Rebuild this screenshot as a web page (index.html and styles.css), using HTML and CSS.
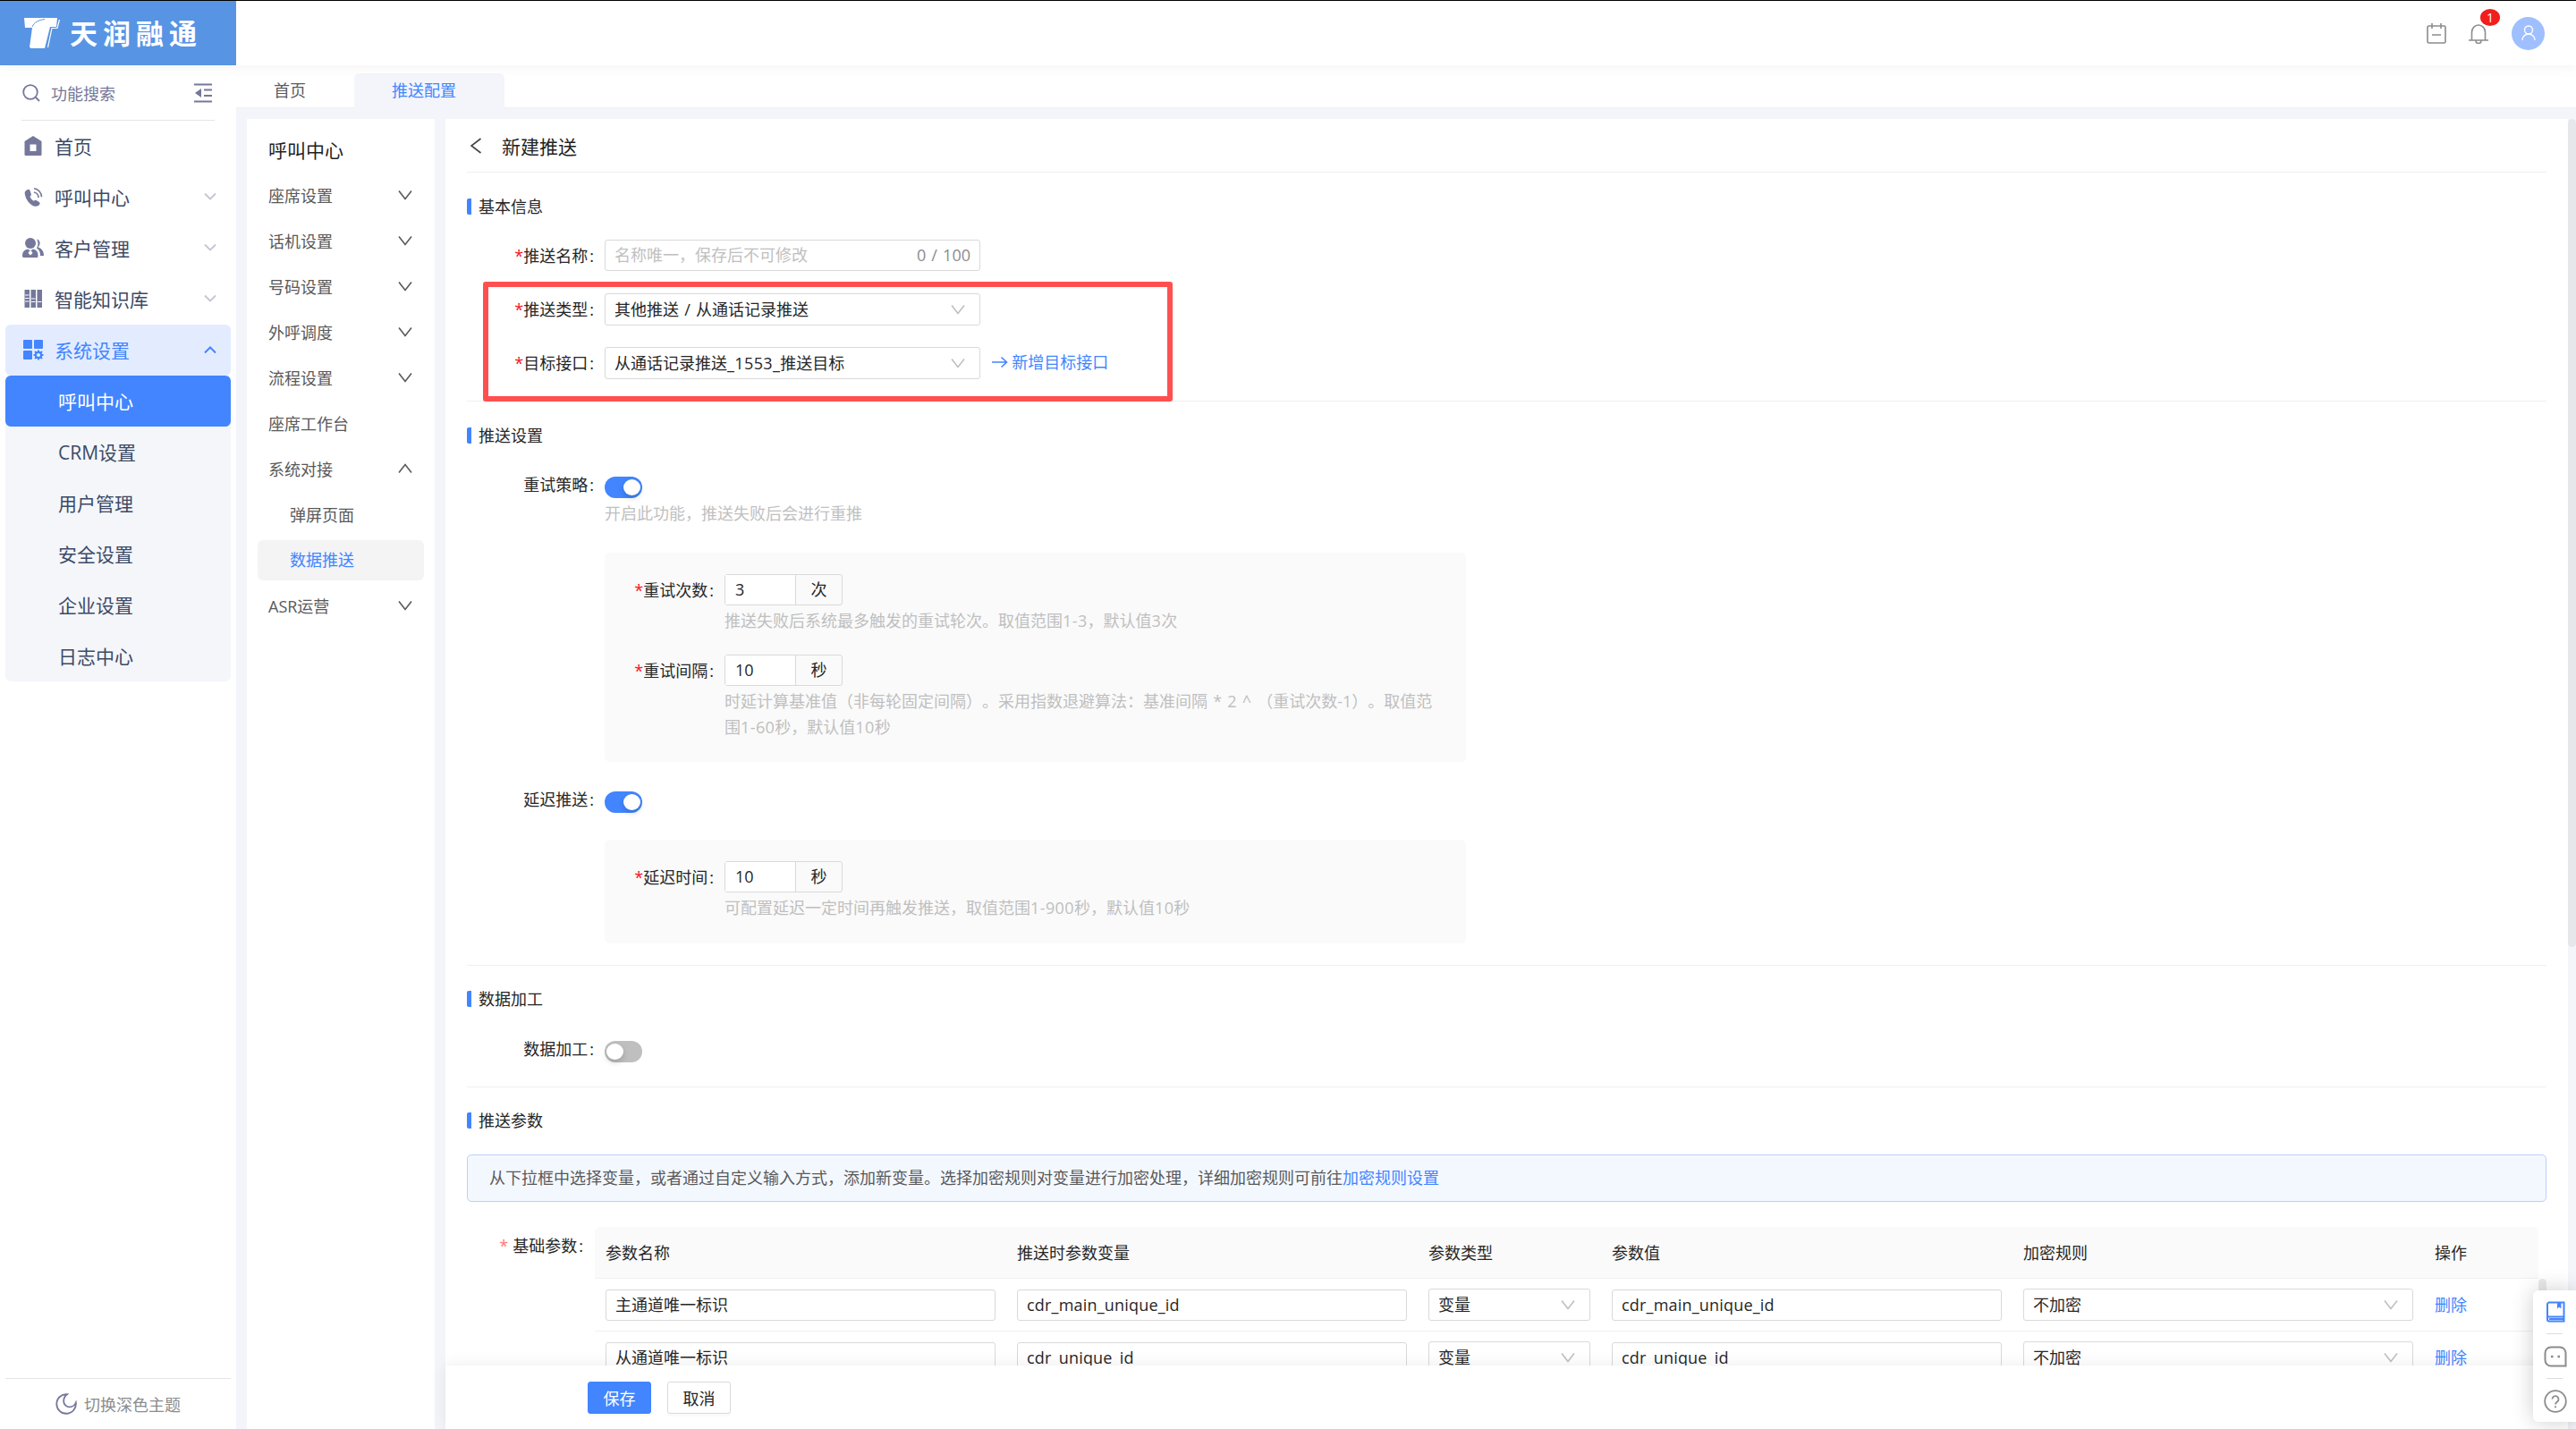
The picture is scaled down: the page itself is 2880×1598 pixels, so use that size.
FILE: index.html
```html
<!DOCTYPE html>
<html lang="zh-CN">
<head>
    <meta charset="UTF-8">
    <meta name="viewport" content="width=device-width, initial-scale=1.0">
    <title>新建推送</title>
    <link rel="stylesheet" href="styles.css">
</head>
<body>
    <!-- 公用图标 -->
    <svg class="sprite" width="0" height="0">
        <symbol id="down" viewBox="0 0 16 12"><path d="M1 1.5l7 9 7-9" fill="none" stroke="currentColor" stroke-width="1.6"/></symbol>
        <symbol id="up" viewBox="0 0 16 12"><path d="M1 10.5l7-9 7 9" fill="none" stroke="currentColor" stroke-width="1.6"/></symbol>
        <symbol id="menu-down" viewBox="0 0 14 10"><path d="M1 1.5l6 6 6-6" fill="none" stroke="currentColor" stroke-width="1.8"/></symbol>
    </svg>

    <header class="header">
        <div class="logo">
            <svg width="43" height="36" viewBox="0 0 43 36">
                <path d="M1 1h35l-2 3c-5 0-8 2-9 5l-2 25H7l3-22H2z" fill="#fff"/>
                <path d="M17 11C19 5 24 2 38 1l-1 10h-7l-6 24H8l3-24z" fill="#fff"/>
                <path d="M10 11c2-5 7-7.500 14-8.500" fill="none" stroke="#5794e4" stroke-width="1"/>
                <path d="M40.500 3l-2.500 9.500h-6L27.500 34" fill="none" stroke="#fff" stroke-width="1.2"/>
            </svg>
            <span>天润融通</span>
        </div>
        <div class="header-tools">
            <svg class="calendar" width="24" height="24" viewBox="0 0 24 24" fill="none" stroke="#8c8c8c" stroke-width="1.6">
                <rect x="2" y="4" width="20" height="19" rx="1.5"/>
                <path d="M7 1v6M17 1v6M7 14h10"/>
            </svg>
            <div class="bell">
                <svg width="24" height="24" viewBox="0 0 24 24" fill="none" stroke="#8c8c8c" stroke-width="1.6">
                    <path d="M4.500 20v-9a7.500 8 0 0 1 15 0v9M1 20h22M9 20.500a3 3 0 0 0 6 0"/>
                </svg>
                <span class="badge">1</span>
            </div>
            <div class="avatar">
                <svg width="16" height="18" viewBox="0 0 16 18" fill="none" stroke="#fff" stroke-width="1.4">
                    <circle cx="8" cy="5.500" r="4.500"/>
                    <path d="M1 17a7 7 0 0 1 14 0"/>
                </svg>
            </div>
        </div>
    </header>

    <div class="layout">
        <aside class="sidebar">
            <div class="search">
                <svg width="20" height="20" viewBox="0 0 20 20" fill="none" stroke="#75789a" stroke-width="1.8">
                    <circle cx="9" cy="9" r="7.800"/>
                    <path d="M14.500 14.500L19 19"/>
                </svg>
                <span>功能搜索</span>
                <svg class="fold" width="20" height="22" viewBox="0 0 20 22">
                    <path d="M0 1.500h20M11 7.500h9M11 14h9M0 20.500h20" stroke="#75789a" stroke-width="2"/>
                    <path d="M8 6v10l-7-5z" fill="#75789a"/>
                </svg>
            </div>
            <ul class="menu">
                <li>
                    <svg class="icon" width="24" height="24" viewBox="0 0 24 24"><path fill="#75789a" fill-rule="evenodd" d="M12 1l9.500 6v15a1 1 0 0 1-1 1h-17a1 1 0 0 1-1-1V7zM8.500 10.500v7.500h7v-7.500z"/></svg>
                    首页
                </li>
                <li>
                    <svg class="icon" width="24" height="24" viewBox="0 0 24 24">
                        <path fill="#75789a" d="M6 4C3 5 2 7 3 10c1.500 6 5 10.500 10 12.500 3 1 6-.5 6.500-2.500.3-1-.2-1.700-1-2.200l-3-1.800c-1-.5-1.800-.2-2.600.8C10.500 15.500 9 13.500 8.500 11.500c1.200-.6 1.600-1.500 1.300-2.500L8.500 5C8 4 7 3.600 6 4z"/>
                        <path fill="none" stroke="#75789a" stroke-width="1.600" d="M13 7a6 6 0 0 1 5 6M13 2.800a9.500 9.500 0 0 1 8.500 9.500"/>
                    </svg>
                    呼叫中心
                    <svg class="arrow" width="14" height="10"><use href="#menu-down"/></svg>
                </li>
                <li>
                    <svg class="icon" width="26" height="24" viewBox="0 0 26 24">
                        <ellipse cx="10" cy="7" rx="6" ry="6" fill="#75789a"/>
                        <path fill="#75789a" d="M1 21c0-4.500 2-6.500 6-7.500l3 2 3-2c4 1 5.500 3 5.500 7.500 0 1.500-.4 2-1.500 2H3c-1.500 0-2-.5-2-2zM17 2.500c4 1 5 5.500 1.500 9 4 1.500 6.500 4 6.500 9.500h-4c0-4-1-6.500-4-8.500 2-3 2-7 0-10z"/>
                        <path d="M9 15.500h2l1.500 2.500-2.500 2.500L7.500 18z" fill="#fff"/>
                    </svg>
                    客户管理
                    <svg class="arrow" width="14" height="10"><use href="#menu-down"/></svg>
                </li>
                <li>
                    <svg class="icon" width="24" height="24" viewBox="0 0 24 24">
                        <path fill="#75789a" d="M2.500 2h5.500v20H2.500zM9.500 2H15v20H9.500zM16.500 2H22v20h-5.500z"/>
                        <path d="M3 8h4.500M3 11.500h4.500M3 15h4.500M10 12h4.500M10 15.500h4.500M17 15.500h4.500" stroke="#fff" stroke-width="1.200"/>
                    </svg>
                    智能知识库
                    <svg class="arrow" width="14" height="10"><use href="#menu-down"/></svg>
                </li>
                <li class="open">
                    <svg class="icon" width="24" height="24" viewBox="0 0 24 24" fill="#4285ff">
                        <rect x="1" y="1" width="10" height="10" rx="1"/>
                        <rect x="13" y="1" width="10" height="10" rx="1"/>
                        <rect x="1" y="13" width="10" height="10" rx="1"/>
                        <circle cx="18" cy="18" r="3.200" fill="none" stroke="#4285ff" stroke-width="2.200"/>
                        <path d="M18 12.500v2M18 21.500v2M12.500 18h2M21.500 18h2M14 14l1.500 1.500M20.500 20.500L22 22M22 14l-1.500 1.500M15.500 20.500L14 22" stroke="#4285ff" stroke-width="2"/>
                    </svg>
                    系统设置
                    <svg class="arrow" width="14" height="10"><path d="M1 8.500l6-6 6 6" fill="none" stroke="#4285ff" stroke-width="2"/></svg>
                </li>
            </ul>
            <ul class="submenu">
                <li class="active">呼叫中心</li>
                <li>CRM设置</li>
                <li>用户管理</li>
                <li>安全设置</li>
                <li>企业设置</li>
                <li>日志中心</li>
            </ul>
            <div class="theme">
                <svg width="24" height="24" viewBox="0 0 24 24" fill="none" stroke="#75789a" stroke-width="1.800">
                    <path d="M13 1.200A10.800 10.800 0 1 0 22.800 10.500C21 14.500 17 16.500 12.500 14.500 8 12 8 5 13 1.200z"/>
                </svg>
                <span>切换深色主题</span>
            </div>
        </aside>

        <div class="content">
            <nav class="tabs">
                <div class="tab">首页</div>
                <div class="tab active">推送配置</div>
            </nav>

            <div class="panels">
                <div class="side-nav">
                    <h3>呼叫中心</h3>
                    <ul>
                        <li>座席设置<svg width="16" height="12"><use href="#down"/></svg></li>
                        <li>话机设置<svg width="16" height="12"><use href="#down"/></svg></li>
                        <li>号码设置<svg width="16" height="12"><use href="#down"/></svg></li>
                        <li>外呼调度<svg width="16" height="12"><use href="#down"/></svg></li>
                        <li>流程设置<svg width="16" height="12"><use href="#down"/></svg></li>
                        <li>座席工作台</li>
                        <li>系统对接<svg width="16" height="12"><use href="#up"/></svg></li>
                        <li class="child">弹屏页面</li>
                        <li class="child active"><span>数据推送</span></li>
                        <li>ASR运营<svg width="16" height="12"><use href="#down"/></svg></li>
                    </ul>
                </div>

                <main class="main">
                    <div class="page">
                        <div class="page-title">
                            <svg width="14" height="18" viewBox="0 0 14 18"><path d="M12.500 1L2 9l10.500 8" fill="none" stroke="#444" stroke-width="1.600"/></svg>
                            <h2>新建推送</h2>
                        </div>

                        <section class="section basic">
                            <h4>基本信息</h4>
                            <div class="form-item">
                                <label class="required">推送名称</label>
                                <div class="input"><span class="placeholder">名称唯一，保存后不可修改</span><span class="count">0 / 100</span></div>
                            </div>
                            <div class="form-item">
                                <label class="required">推送类型</label>
                                <div class="select">其他推送 / 从通话记录推送<svg width="16" height="12"><use href="#down"/></svg></div>
                            </div>
                            <div class="form-item">
                                <label class="required">目标接口</label>
                                <div class="select"><span>从通话记录推送<span class="latin">_1553_</span>推送目标</span><svg width="16" height="12"><use href="#down"/></svg></div>
                                <a class="add-link" href="#">
                                    <svg width="18" height="14" viewBox="0 0 18 14"><path d="M0 7h16M10.500 1.500L16.500 7l-6 5.500" fill="none" stroke="#4285ff" stroke-width="1.600"/></svg>
                                    新增目标接口
                                </a>
                            </div>
                            <div class="mark"></div>
                        </section>

                        <section class="section push">
                            <h4>推送设置</h4>
                            <div class="form-item">
                                <label>重试策略</label>
                                <div class="switch on"></div>
                            </div>
                            <p class="help">开启此功能，推送失败后会进行重推</p>
                            <div class="box retry">
                                <div class="form-item">
                                    <label class="required">重试次数</label>
                                    <div class="number"><span>3</span><em>次</em></div>
                                </div>
                                <p class="help">推送失败后系统最多触发的重试轮次。取值范围<span class="latin">1-3</span>，默认值<span class="latin">3</span>次</p>
                                <div class="form-item">
                                    <label class="required">重试间隔</label>
                                    <div class="number"><span>10</span><em>秒</em></div>
                                </div>
                                <p class="help">时延计算基准值（非每轮固定间隔）。采用指数退避算法：基准间隔 * 2 ^ （重试次数-1）。取值范围<span class="latin">1-60</span>秒，默认值<span class="latin">10</span>秒</p>
                            </div>
                            <div class="form-item delay-switch">
                                <label>延迟推送</label>
                                <div class="switch on"></div>
                            </div>
                            <div class="box delay">
                                <div class="form-item">
                                    <label class="required">延迟时间</label>
                                    <div class="number"><span>10</span><em>秒</em></div>
                                </div>
                                <p class="help">可配置延迟一定时间再触发推送，取值范围<span class="latin">1-900</span>秒，默认值<span class="latin">10</span>秒</p>
                            </div>
                        </section>

                        <section class="section process">
                            <h4>数据加工</h4>
                            <div class="form-item">
                                <label>数据加工</label>
                                <div class="switch"></div>
                            </div>
                        </section>

                        <section class="section params">
                            <h4>推送参数</h4>
                            <div class="alert">从下拉框中选择变量，或者通过自定义输入方式，添加新变量。选择加密规则对变量进行加密处理，详细加密规则可前往<a href="#">加密规则设置</a></div>
                            <div class="param-wrap">
                                <label class="param-label">基础参数</label>
                                <div class="table">
                                    <div class="tr th">
                                        <div>参数名称</div>
                                        <div>推送时参数变量</div>
                                        <div>参数类型</div>
                                        <div>参数值</div>
                                        <div>加密规则</div>
                                        <div>操作</div>
                                    </div>
                                    <div class="tr">
                                        <div><div class="input">主通道唯一标识</div></div>
                                        <div><div class="input code">cdr_main_unique_id</div></div>
                                        <div><div class="select">变量<svg width="16" height="12"><use href="#down"/></svg></div></div>
                                        <div><div class="input code">cdr_main_unique_id</div></div>
                                        <div><div class="select">不加密<svg width="16" height="12"><use href="#down"/></svg></div></div>
                                        <div><a href="#">删除</a></div>
                                    </div>
                                    <div class="tr">
                                        <div><div class="input">从通道唯一标识</div></div>
                                        <div><div class="input code">cdr_unique_id</div></div>
                                        <div><div class="select">变量<svg width="16" height="12"><use href="#down"/></svg></div></div>
                                        <div><div class="input code">cdr_unique_id</div></div>
                                        <div><div class="select">不加密<svg width="16" height="12"><use href="#down"/></svg></div></div>
                                        <div><a href="#">删除</a></div>
                                    </div>
                                </div>
                                <div class="table-scroll"></div>
                            </div>
                        </section>
                    </div>

                    <footer class="footer">
                        <button class="btn primary">保存</button>
                        <button class="btn">取消</button>
                    </footer>
                </main>
                <div class="scrollbar"></div>
            </div>
        </div>
    </div>

    <div class="float-tools">
        <svg width="22" height="24" viewBox="0 0 22 24" fill="none" stroke="#4285ff" stroke-width="2">
            <path d="M4 1.500h16.500v21H4A2 2 0 0 1 2 20.500V3.500a2 2 0 0 1 2-2zM2 17.500h18.500M4 20h16"/>
            <path d="M13 2v6.500l2.200-2 2.200 2V2z" fill="#4285ff" stroke="none"/>
        </svg>
        <i></i>
        <svg width="26" height="24" viewBox="0 0 26 24" fill="none" stroke="#8c8c8c" stroke-width="2">
            <path d="M8 1.500h10a6.500 6.500 0 0 1 6.500 6.500v14.500H8A6.500 6.500 0 0 1 1.500 16V8A6.500 6.500 0 0 1 8 1.500z"/>
            <path d="M8 12h2.500M15.500 12H18" stroke-width="2.500"/>
        </svg>
        <i></i>
        <svg width="26" height="26" viewBox="0 0 26 26" fill="none" stroke="#8c8c8c" stroke-width="1.800">
            <circle cx="13" cy="13" r="11.800"/>
            <path d="M9.500 10.500a3.500 3.500 0 1 1 5.500 3c-1.300.9-2 1.500-2 3M13 18.200v2"/>
        </svg>
    </div>
</body>
</html>
```
FILE: styles.css
```css
* {
    margin: 0;
    padding: 0;
    box-sizing: border-box;
}

body {
    width: 2880px;
    height: 1598px;
    overflow: hidden;
    position: relative;
    display: flex;
    flex-direction: column;
    background: #fff;
    border-top: 1px solid #000;
    color: #262626;
    font-family: "Open Sans", "Noto Sans CJK SC", sans-serif;
    font-size: 18px;
    font-weight: 400;
    word-spacing: 1.5px;
    text-spacing-trim: space-all;
}

ul {
    list-style: none;
}

a {
    color: #4285ff;
    text-decoration: none;
}

.sprite {
    position: absolute;
}

.latin {
    letter-spacing: 0.4px;
}

/* 顶部 */
.header {
    height: 72px;
    flex: none;
    display: flex;
    justify-content: space-between;
    background: #fff;
    box-shadow: 0 2px 14px rgba(0, 0, 0, 0.05);
    position: relative;
    z-index: 5;
}

.logo {
    width: 264px;
    background: #5794e4;
    display: flex;
    align-items: center;
    padding-left: 26px;
    gap: 9px;
}

.logo span {
    color: #fff;
    font-size: 31px;
    font-weight: 700;
    letter-spacing: 6px;
    line-height: 40px;
}

.header-tools {
    display: flex;
    align-items: center;
    padding-right: 35px;
}

.calendar {
    margin-right: 23px;
}

.bell {
    position: relative;
    height: 24px;
    margin-right: 25px;
}

.badge {
    position: absolute;
    left: 14px;
    top: -15px;
    width: 22px;
    height: 19px;
    border-radius: 50%;
    background: #f21d1d;
    color: #fff;
    font-size: 14px;
    line-height: 19px;
    text-align: center;
}

.avatar {
    width: 37px;
    height: 37px;
    border-radius: 50%;
    background: #9fbfff;
    display: flex;
    align-items: center;
    justify-content: center;
}

.layout {
    flex: 1;
    min-height: 0;
    display: flex;
}

/* 左侧菜单 */
.sidebar {
    width: 264px;
    flex: none;
    display: flex;
    flex-direction: column;
}

.search {
    height: 62px;
    margin: 0 24px;
    border-bottom: 1px solid #e4e4e6;
    display: flex;
    align-items: center;
    color: #75789a;
    padding: 1px 3px 0 1px;
}

.search span {
    margin-left: 12px;
    flex: 1;
}

.menu li {
    height: 57px;
    margin: 0 6px;
    padding: 0 16px 2px 18px;
    display: flex;
    align-items: center;
    font-size: 21px;
    color: #3c4a66;
}

.menu .icon {
    width: 26px;
    margin-right: 11px;
}

.menu .arrow {
    margin-left: auto;
    color: #c3c5d3;
}

.menu .open {
    background: #e3ecff;
    color: #4285ff;
    border-radius: 6px;
}

.submenu {
    margin: 0 6px;
    background: #f4f6fa;
    border-radius: 6px;
}

.submenu li {
    height: 57px;
    line-height: 58px;
    padding-left: 59px;
    font-size: 21px;
    color: #3c4a66;
}

.submenu .active {
    background: #4285ff;
    border-radius: 6px;
    color: #fff;
}

.theme {
    margin: auto 6px 0;
    height: 57px;
    border-top: 1px solid #e4e4e6;
    display: flex;
    align-items: center;
    justify-content: center;
    gap: 8px;
    color: #8c8c8c;
}

/* 标签页 */
.content {
    flex: 1;
    min-width: 0;
    display: flex;
    flex-direction: column;
    background: #f4f5fa;
}

.tabs {
    height: 48px;
    padding: 9px 0 0 0;
    flex: none;
    display: flex;
    background: #fff;
    border-bottom: 1px solid #f0f0f0;
}

.tab {
    width: 132px;
    line-height: 39px;
    padding-left: 42px;
    color: #595959;
}

.tab.active {
    width: 168px;
    height: 39px;
    background: #f4f5fa;
    border-radius: 6px 6px 0 0;
    color: #4285ff;
}

.panels {
    flex: 1;
    min-height: 0;
    display: flex;
    margin: 12px 0 0 12px;
}

.side-nav {
    width: 210px;
    flex: none;
    background: #fff;
    margin-right: 12px;
}

.side-nav h3 {
    font-size: 21px;
    font-weight: 400;
    line-height: 30px;
    padding: 20px 0 10px 24px;
    color: #1f1f1f;
}

.side-nav li {
    height: 51px;
    padding: 0 25px 2px 24px;
    display: flex;
    align-items: center;
    justify-content: space-between;
    color: #595959;
}

.side-nav .child {
    padding-left: 48px;
}

.side-nav .child.active {
    padding: 0 12px;
    color: #4285ff;
}

.side-nav .active span {
    width: 100%;
    padding-left: 36px;
    line-height: 45px;
    background: #f4f4f4;
    border-radius: 6px;
}

/* 主体 */
.main {
    width: 2373px;
    display: flex;
    flex-direction: column;
    background: #fff;
}

.page {
    flex: 1;
    min-height: 0;
    overflow: hidden;
    padding: 0 24px;
}

.page-title {
    height: 60px;
    display: flex;
    align-items: center;
    border-bottom: 1px solid #efefef;
    padding-left: 3px;
}

.page-title h2 {
    margin-left: 22px;
    font-size: 21px;
    font-weight: 400;
    color: #1f1f1f;
}

.section {
    position: relative;
    border-bottom: 1px solid #f0f0f0;
    padding-top: 29px;
}

.section h4 {
    height: 18px;
    line-height: 18px;
    font-size: 18px;
    font-weight: 400;
    border-left: 5px solid #4285ff;
    border-radius: 2px;
    padding-left: 8px;
    margin-bottom: 28px;
}

.form-item {
    display: flex;
    height: 36px;
}

.form-item label {
    width: 154px;
    padding-right: 12px;
    line-height: 36px;
    text-align: right;
    flex: none;
}

.form-item label::after {
    content: ":";
    margin-left: 2px;
}

.required::before {
    content: "*";
    color: #f5121d;
}

.basic .form-item {
    margin-bottom: 24px;
}

.input,
.select {
    width: 420px;
    height: 35px;
    border: 1px solid #d9d9d9;
    border-radius: 3px;
    padding: 0 10px;
    line-height: 33px;
    background: #fff;
    display: flex;
    justify-content: space-between;
}

.select {
    height: 36px;
    padding-right: 16px;
    align-items: center;
}

.select svg {
    color: #bfbfbf;
}

.placeholder {
    color: #bfbfbf;
}

.count {
    color: #8c8c8c;
}

.add-link {
    margin-left: 13px;
    line-height: 35px;
}

.add-link svg {
    margin-right: -2px;
}

/* 红色标注框 */
.mark {
    position: absolute;
    left: 18px;
    top: 122px;
    width: 771px;
    height: 134px;
    border: 6px solid #ff5050;
    border-radius: 3px;
}

.switch {
    width: 42px;
    height: 24px;
    margin-top: 9px;
    border-radius: 12px;
    background: #bfbfbf;
    padding: 3px 2px;
}

.switch::before {
    content: "";
    display: block;
    width: 19px;
    height: 18px;
    border-radius: 50%;
    background: #fff;
    box-shadow: 0 3px 6px rgba(0, 35, 11, 0.2);
}

.switch.on {
    background: #4285ff;
}

.switch.on::before {
    margin-left: auto;
}

.help {
    margin-left: 154px;
    line-height: 29px;
    color: #bfbfbf;
}

.box {
    width: 963px;
    margin-left: 154px;
    padding: 24px 0;
    background: #fafafa;
    border-radius: 6px;
}

.box label {
    width: 134px;
}

.box .help {
    width: 800px;
    margin: 2px 0 23px 134px;
}

.box .help:last-child {
    margin-bottom: 0;
}

.number {
    display: flex;
    width: 132px;
    height: 35px;
    border: 1px solid #d9d9d9;
    border-radius: 3px;
    line-height: 33px;
}

.number span {
    width: 79px;
    padding-left: 11px;
    background: #fff;
    border-right: 1px solid #d9d9d9;
}

.number em {
    flex: 1;
    font-style: normal;
    text-align: center;
}

.retry {
    height: 234px;
    margin-top: 29px;
    padding-bottom: 0;
}

.delay-switch {
    margin-top: 24px;
}

.delay {
    height: 116px;
    margin: 27px 0 24px 154px;
}

.process,
.params {
    padding-top: 28px;
}

.process h4,
.params h4 {
    margin-bottom: 29px;
}

.process {
    padding-bottom: 24px;
}

.params {
    border-bottom: none;
}

.alert {
    height: 53px;
    line-height: 50px;
    padding-left: 24px;
    border: 1px solid #b8d0fb;
    border-radius: 5px;
    background: #f3f8ff;
    color: #595959;
}

.param-wrap {
    display: flex;
    margin-top: 28px;
}

.param-label {
    width: 143px;
    padding-right: 13px;
    line-height: 42px;
    text-align: right;
    flex: none;
}

.param-label::before {
    content: "*";
    color: #ff7875;
    margin-right: 5px;
}

.param-label::after {
    content: ":";
    margin-left: 2px;
}

.table {
    width: 2173px;
}

.tr {
    display: grid;
    grid-template-columns: 460px 460px 205px 460px 460px 1fr;
    align-items: center;
    height: 59px;
    border-bottom: 1px solid #f0f0f0;
}

.tr > div {
    padding: 0 12px;
}

.tr .input,
.tr .select {
    width: 100%;
    line-height: 32px;
}

.tr .code {
    letter-spacing: 0.2px;
}

.tr a {
    display: block;
    padding-bottom: 2px;
}

.tr.th {
    height: 58px;
    padding-bottom: 2px;
    background: #fafafa;
    border-radius: 6px 6px 0 0;
}

.table-scroll {
    width: 9px;
    height: 200px;
    margin-top: 58px;
    border-radius: 5px;
    background: #e9e9ea;
}

.footer {
    height: 71px;
    flex: none;
    display: flex;
    gap: 18px;
    padding: 18px 0 0 159px;
    background: #fff;
    box-shadow: 0 0 16px rgba(0, 0, 0, 0.08);
    position: relative;
}

.btn {
    width: 71px;
    height: 36px;
    border: 1px solid #d9d9d9;
    border-radius: 3px;
    background: #fff;
    color: #262626;
    font: inherit;
    box-shadow: 0 3px 0 rgba(0, 0, 0, 0.02);
}

.btn.primary {
    background: #4285ff;
    border-color: #4285ff;
    color: #fff;
}

.scrollbar {
    width: 9px;
    height: 926px;
    border-radius: 5px;
    background: #e6e7ea;
}

/* 右下角悬浮工具 */
.float-tools {
    position: absolute;
    right: 0;
    top: 1442px;
    width: 48px;
    height: 147px;
    padding: 12px 0 10px 12px;
    display: flex;
    flex-direction: column;
    justify-content: space-between;
    background: #fff;
    border-radius: 6px 0 0 6px;
    box-shadow: 0 0 24px rgba(0, 0, 0, 0.2);
    z-index: 6;
}

.float-tools svg:first-child {
    margin-left: 2px;
}

.float-tools i {
    width: 18px;
    height: 1px;
    margin-left: 3px;
    background: #ddd;
}
```
